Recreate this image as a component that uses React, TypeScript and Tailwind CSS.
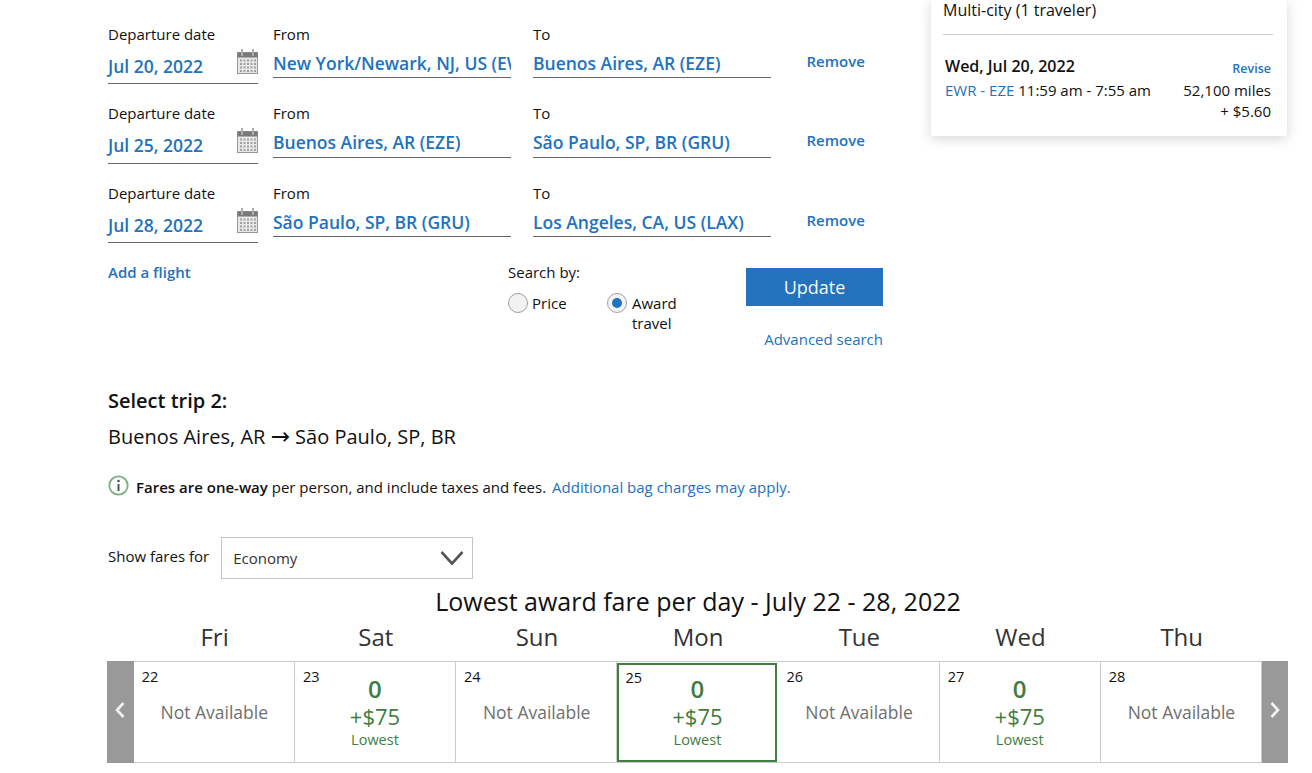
import React from "react";

const BLUE = "text-[#2272bd]";

function Cal() {
  return (
    <svg width="21" height="25" viewBox="0 0 21 25" className="block">
      <rect x="0.5" y="3.5" width="20" height="21" fill="#e9e8e8" stroke="#9a9698" />
      <rect x="0.5" y="3.5" width="20" height="5" fill="#7b787a" />
      <rect x="4" y="0" width="2" height="7" fill="#b0aeae" />
      <rect x="15" y="0" width="2" height="7" fill="#b0aeae" />
      {[10.5, 14, 17.5, 21].map((y) =>
        [3, 6.5, 10, 13.5, 17].map((x) => (
          <rect key={`${x}-${y}`} x={x} y={y} width="2" height="2" fill="#a3a0a1" />
        ))
      )}
    </svg>
  );
}

function Row({ date, from, to, h, low }: { date: string; from: string; to: string; h: string; low?: boolean }) {
  const field = `box-content h-[26px] overflow-hidden whitespace-nowrap border-b border-[#666] text-[17.5px] font-semibold leading-[24px] ${BLUE} ${low ? "mt-[7px] pt-[1px]" : "mt-[7px]"}`;
  return (
    <div className={`flex items-start ${h}`}>
      <div className="w-[150px] shrink-0">
        <div className="text-[15px] leading-[20px] text-[#111]">Departure date</div>
        <div className={`mt-[2px] flex items-start justify-between border-b border-[#666] ${low ? "h-[39px]" : "h-[38px]"}`}>
          <span className={`mt-[8px] text-[17.5px] font-semibold leading-[24px] ${BLUE}`}>{date}</span>
          <span className="mt-[3px]"><Cal /></span>
        </div>
      </div>
      <div className="ml-[15px] w-[238px] shrink-0">
        <div className="text-[15px] leading-[20px] text-[#111]">From</div>
        <div className={field}><div className={low ? "-mt-[1px]" : ""}>{from}</div></div>
      </div>
      <div className="ml-[22px] w-[238px] shrink-0">
        <div className="text-[15px] leading-[20px] text-[#111]">To</div>
        <div className={field}><div className={low ? "-mt-[1px]" : ""}>{to}</div></div>
      </div>
      <div className={`ml-[35.5px] mt-[27px] text-[15px] font-semibold leading-[20px] ${BLUE}`}>Remove</div>
    </div>
  );
}

function DayCell({ day, fare, selected }: { day: number; fare?: boolean; selected?: boolean }) {
  return (
    <div className={`relative text-center ${selected ? "ml-[0.2px] mr-[1px] mt-[1px] h-[99px] w-[160px] border-[2px] border-[#3f7d40]" : "h-[100px] w-[161.2px] border-r border-[#cccccc]"}`}>
      <div className={`absolute text-[14.5px] leading-[20px] text-[#111] ${selected ? "left-[6px] top-[3px]" : "left-[8px] top-[5px]"}`}>{day}</div>
      {fare ? (
        <div className={`flex flex-col items-center text-[#3f7d40] ${selected ? "pt-[10px]" : "pt-[13px]"}`}>
          <div className="text-[24px] font-semibold leading-[27px]">0</div>
          <div className="text-[22px] leading-[28px]">+$75</div>
          <div className="text-[14.5px] leading-[20px]">Lowest</div>
        </div>
      ) : (
        <div className="pl-[1px] pt-[38px] text-[17.5px] leading-[24px] text-[#6f6f6f]">Not Available</div>
      )}
    </div>
  );
}

export default function App() {
  const days = ["Fri", "Sat", "Sun", "Mon", "Tue", "Wed", "Thu"];
  return (
    <div className="h-[773px] w-[1312px] overflow-hidden bg-white font-['Open_Sans',sans-serif] text-[#111]">
      <div className="flex h-[358px] items-start">
        <div className="ml-[108px] w-[775px] shrink-0 pt-[24px]">
          <Row h="h-[79px]" date="Jul 20, 2022" from="New York/Newark, NJ, US (EWR)" to="Buenos Aires, AR (EZE)" />
          <Row h="h-[80px]" low date="Jul 25, 2022" from="Buenos Aires, AR (EZE)" to="São Paulo, SP, BR (GRU)" />
          <Row h="h-[80px]" date="Jul 28, 2022" from="São Paulo, SP, BR (GRU)" to="Los Angeles, CA, US (LAX)" />
          <div className="flex items-start">
            <div className={`-mt-[1px] w-[400px] text-[15px] font-semibold leading-[20px] ${BLUE}`}>Add a flight</div>
            <div className="-mt-[1px] w-[238px]">
              <div className="text-[15px] leading-[20px]">Search by:</div>
              <div className="mt-[11px] flex items-start text-[15px] leading-[20px]">
                <div className="flex w-[99px] items-center gap-[4px]">
                  <span className="h-[20px] w-[20px] rounded-full border border-[#a0a0a0] bg-[#f2f2f2]" />
                  <span>Price</span>
                </div>
                <div className="flex items-start gap-[5px]">
                  <span className="flex h-[20px] w-[20px] items-center justify-center rounded-full border border-[#a0a0a0] bg-[#f4f4f4]">
                    <span className="h-[10px] w-[10px] rounded-full bg-[#2272bd]" />
                  </span>
                  <span className="w-[50px]">Award travel</span>
                </div>
              </div>
            </div>
            <div className="ml-auto mt-[5px] flex flex-col items-end">
              <div className="flex h-[38px] w-[137px] items-center justify-center bg-[#2272bd] pt-[1px] text-[18px] text-[#f4f8fc]">Update</div>
              <div className={`mt-[23px] text-[15px] leading-[20px] ${BLUE}`}>Advanced search</div>
            </div>
          </div>
        </div>
        <div className="ml-[48px] h-[136px] w-[356px] shrink-0 bg-white pl-[12px] pr-[16px] shadow-[0_3px_12px_rgba(0,0,0,0.16)]">
          <div className="text-[16px] leading-[20px]">Multi-city (1 traveler)</div>
          <div className="mr-[-2px] mt-[14px] border-t border-[#cccccc]" />
          <div className="mt-[20px] flex items-end justify-between pl-[2px]">
            <span className="text-[16px] font-semibold leading-[22px]">Wed, Jul 20, 2022</span>
            <span className={`-mb-[1px] text-[12.5px] font-semibold leading-[18px] ${BLUE}`}>Revise</span>
          </div>
          <div className="mt-[3px] flex justify-between pl-[2px] text-[15px] leading-[21px]">
            <span><span className={BLUE}>EWR - EZE</span> 11:59 am - 7:55 am</span>
            <span className="text-right">52,100 miles<br />+ $5.60</span>
          </div>
        </div>
      </div>

      <div className="ml-[108px]">
        <div className="mt-[31px] text-[20px] font-semibold leading-[24px]">Select trip 2:</div>
        <div className="mt-[12px] h-[24px] text-[20px] leading-[24px]">Buenos Aires, AR <span className="font-['DejaVu_Sans',sans-serif] text-[23px] leading-[20px]">→</span> São Paulo, SP, BR</div>
        <div className="mt-[28px] flex items-center text-[15px] leading-[20px]">
          <svg width="21" height="21" viewBox="0 0 21 21" className="-mt-[3px] mr-[7px]" fill="none">
            <circle cx="10.5" cy="10.5" r="9.2" stroke="#7fae80" strokeWidth="1.8" />
            <circle cx="10.5" cy="6" r="1.3" fill="#4a5a4b" />
            <rect x="9.5" y="9" width="2" height="7" fill="#4a5a4b" />
          </svg>
          <span><span className="font-semibold">Fares are one-way</span> per person, and include taxes and fees.</span>
          <span className={`ml-[6px] ${BLUE}`}>Additional bag charges may apply.</span>
        </div>
        <div className="mt-[40px] flex items-center">
          <span className="-mt-[5px] text-[15px] leading-[20px]">Show fares for</span>
          <div className="ml-[12px] flex h-[42px] w-[252px] items-center justify-between border border-[#c4c4c4] pl-[11px] pr-[8px] text-[15px] text-[#333]">
            <span className="mt-[1px]">Economy</span>
            <svg width="24" height="16" viewBox="0 0 24 16" fill="none"><path d="M1.5 2 12 13.5 22.5 2" stroke="#555" strokeWidth="2.6" /></svg>
          </div>
        </div>
      </div>

      <div className="mt-[6px] w-[1396px] text-center text-[25px] leading-[32px]">Lowest award fare per day - July 22 - 28, 2022</div>
      <div className="ml-[134px] mt-[2px] flex h-[36px] items-center">
        {days.map((d) => (
          <div key={d} className="w-[161.2px] text-center text-[24px] leading-[32px] text-[#333]">{d}</div>
        ))}
      </div>
      <div className="ml-[107px] mt-[6px] box-content flex h-[100px] w-[1181px] border-y border-[#cccccc]">
        <div className="-my-[1px] flex h-[102px] w-[26.7px] shrink-0 items-center justify-center bg-[#999999] pb-[4px]">
          <svg width="12" height="18" viewBox="0 0 12 18" fill="none"><path d="M9.5 2 3 9l6.5 7" stroke="#f2f2f2" strokeWidth="2.6" /></svg>
        </div>
        <div className="flex shrink-0">
          <DayCell day={22} />
          <DayCell day={23} fare />
          <DayCell day={24} />
          <DayCell day={25} fare selected />
          <DayCell day={26} />
          <DayCell day={27} fare />
          <DayCell day={28} />
        </div>
        <div className="-my-[1px] flex h-[102px] w-[26.3px] shrink-0 items-center justify-center bg-[#999999] pb-[4px]">
          <svg width="12" height="18" viewBox="0 0 12 18" fill="none"><path d="M2.5 2 9 9l-6.5 7" stroke="#f2f2f2" strokeWidth="2.6" /></svg>
        </div>
      </div>
    </div>
  );
}
